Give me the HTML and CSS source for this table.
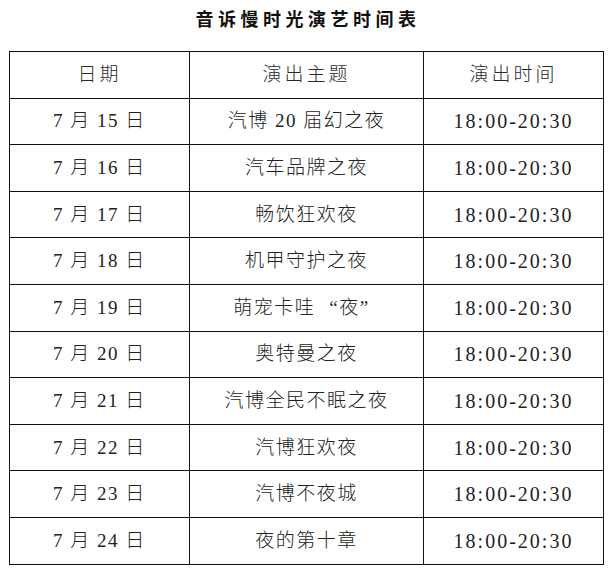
FILE: index.html
```html
<!DOCTYPE html>
<html lang="zh">
<head>
<meta charset="utf-8">
<link rel="stylesheet" href="styles.css">
<title>音诉慢时光演艺时间表</title>
</head>
<body>
<div class="page">
  <h1 class="title">音诉慢时光演艺时间表</h1>
  <table class="schedule">
    <colgroup>
      <col class="c-date"><col class="c-theme"><col class="c-time">
    </colgroup>
    <thead>
      <tr><th>日期</th><th>演出主题</th><th>演出时间</th></tr>
    </thead>
    <tbody>
      <tr><td>7 月 15 日</td><td>汽博 20 届幻之夜</td><td class="num">18:00-20:30</td></tr>
      <tr><td>7 月 16 日</td><td>汽车品牌之夜</td><td class="num">18:00-20:30</td></tr>
      <tr><td>7 月 17 日</td><td>畅饮狂欢夜</td><td class="num">18:00-20:30</td></tr>
      <tr><td>7 月 18 日</td><td>机甲守护之夜</td><td class="num">18:00-20:30</td></tr>
      <tr><td>7 月 19 日</td><td>萌宠卡哇<span class="q ql">“</span>夜<span class="q qr">”</span></td><td class="num">18:00-20:30</td></tr>
      <tr><td>7 月 20 日</td><td>奥特曼之夜</td><td class="num">18:00-20:30</td></tr>
      <tr><td>7 月 21 日</td><td>汽博全民不眠之夜</td><td class="num">18:00-20:30</td></tr>
      <tr><td>7 月 22 日</td><td>汽博狂欢夜</td><td class="num">18:00-20:30</td></tr>
      <tr><td>7 月 23 日</td><td>汽博不夜城</td><td class="num">18:00-20:30</td></tr>
      <tr><td>7 月 24 日</td><td>夜的第十章</td><td class="num">18:00-20:30</td></tr>
    </tbody>
  </table>
</div>
</body>
</html>
```
FILE: styles.css
```css
html, body {
  margin: 0;
  padding: 0;
  background: #ffffff;
}
.page {
  padding: 6px 0 0 9px;
  width: 594px;
  font-family: "Liberation Serif", "Noto Sans CJK SC", serif;
  color: #1a1a1a;
}
.title {
  margin: 0 0 21px 0;
  text-align: center;
  font-family: "Noto Sans CJK SC", sans-serif;
  font-weight: 700;
  font-size: 18px;
  line-height: 24px;
  letter-spacing: 4.5px;
  color: #111;
  padding-left: 4px;
}
.schedule {
  width: 594px;
  border-collapse: collapse;
  table-layout: fixed;
}
.c-date { width: 180px; }
.c-theme { width: 234px; }
.c-time { width: 180px; }
.schedule th,
.schedule td {
  border: 1px solid #111;
  height: 45.6px;
  padding: 0;
  text-align: center;
  vertical-align: middle;
  font-weight: 300;
  font-size: 19px;
  letter-spacing: 1.5px;
  line-height: 24px;
  font-family: "Liberation Serif", "Noto Sans CJK SC", serif;
  color: #222;
}
.schedule th {
  color: #2a2a2a;
  letter-spacing: 3px;
}
.schedule td.num {
  font-size: 20px;
  letter-spacing: 2px;
  font-weight: 400;
}
.q {
  display: inline-block;
  width: 20px;
}
.ql {
  text-align: right;
  margin-left: 4px;
}
.qr {
  text-align: left;
}
```
